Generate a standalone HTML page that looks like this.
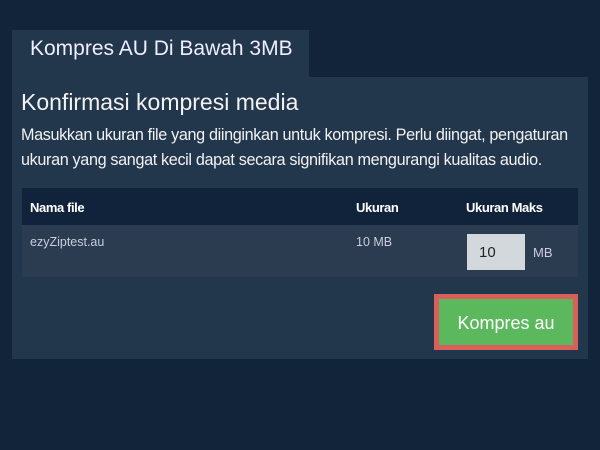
<!DOCTYPE html>
<html><head><style>
body{margin:0;width:600px;height:450px;background:#12243a;font-family:"Liberation Sans",sans-serif;position:relative;overflow:hidden;color:#fff}
.a{position:absolute}
</style></head><body>
<div class="a" style="left:12px;top:30px;width:297px;height:47px;background:#22364c"></div>
<div class="a" style="left:30px;top:37px;font-size:21px;color:#eef">Kompres AU Di Bawah 3MB</div>
<div class="a" style="left:12px;top:77px;width:576px;height:282px;background:#22364c"></div>
<div class="a" style="left:21px;top:89px;font-size:23px;color:#f2f2f2">Konfirmasi kompresi media</div>
<div class="a" style="left:21px;top:123px;font-size:16.2px;line-height:25px;color:#f2f2f2;letter-spacing:-0.35px;width:560px;white-space:nowrap">Masukkan ukuran file yang diinginkan untuk kompresi. Perlu diingat, pengaturan<br>ukuran yang sangat kecil dapat secara signifikan mengurangi kualitas audio.</div>
<div class="a" style="left:22px;top:188px;width:556px;height:37px;background:#11233a"></div>
<div class="a" style="left:22px;top:225px;width:556px;height:52px;background:#2b3c50"></div>
<div class="a" style="left:30px;top:200px;font-size:13px;font-weight:bold;letter-spacing:-0.4px">Nama file</div>
<div class="a" style="left:356px;top:200px;font-size:13px;font-weight:bold;letter-spacing:-0.4px">Ukuran</div>
<div class="a" style="left:466px;top:200px;font-size:13px;font-weight:bold;letter-spacing:-0.4px">Ukuran Maks</div>
<div class="a" style="left:30px;top:235px;font-size:12.5px;color:#ccd">ezyZiptest.au</div>
<div class="a" style="left:356px;top:235px;font-size:12.5px;color:#ccd">10 MB</div>
<div class="a" style="left:467px;top:234px;width:58px;height:36px;background:#d3d8dd"></div>
<div class="a" style="left:479px;top:244px;font-size:15px;color:#222">10</div>
<div class="a" style="left:533px;top:245px;font-size:13px;color:#ccd">MB</div>
<div class="a" style="left:434px;top:294px;width:134px;height:46px;background:#5cb85c;border:5px solid #d9605a"></div>
<div class="a" style="left:434px;top:313px;width:144px;text-align:center;font-size:18px;color:#fff">Kompres au</div>
</body></html>
